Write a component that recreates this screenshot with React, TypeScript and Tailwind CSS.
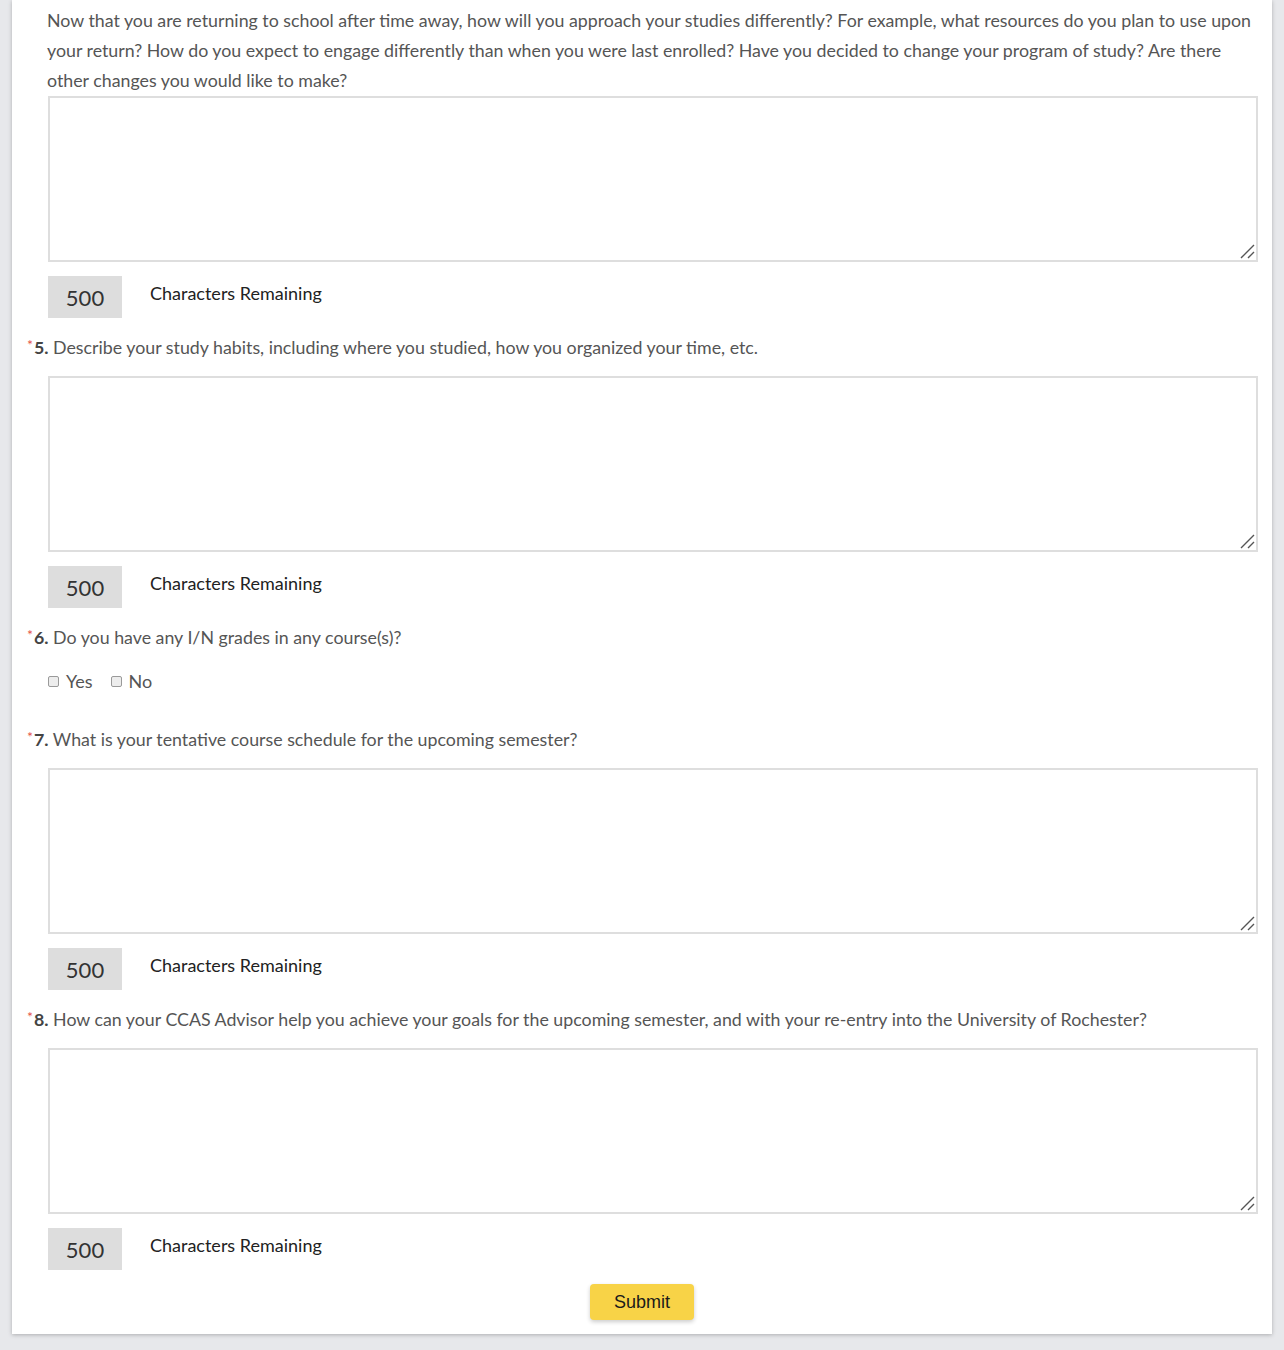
import React from 'react';

const questions = [
  { n: 5, text: 'Describe your study habits, including where you studied, how you organized your time, etc.', h: 'h-[176px]' },
  { n: 6, text: 'Do you have any I/N grades in any course(s)?', checkbox: true },
  { n: 7, text: 'What is your tentative course schedule for the upcoming semester?', h: 'h-[166px]' },
  {
    n: 8,
    text: 'How can your CCAS Advisor help you achieve your goals for the upcoming semester, and with your re-entry into the University of Rochester?',
    h: 'h-[166px]',
  },
];

function Counter() {
  return (
    <div className="mt-[14px] ml-[36px] flex items-start">
      <div className="flex h-[42px] w-[74px] items-center justify-center bg-[#dddddd] text-[22px] text-[#333]">500</div>
      <span className="ml-[28px] mt-[2px] text-[18px] leading-[30px] text-[#222]">Characters Remaining</span>
    </div>
  );
}

function Label({ n, text }: { n: number; text: string }) {
  return (
    <p className="mt-[14px] h-[30px] pl-[15px] text-[17.8px] leading-[30px] text-[#555]">
      <span className="relative -top-[4px] mr-[1px] text-[14px] leading-none text-[#e5534b]">*</span>
      <span className="font-bold text-[#444]">{n}.</span> {text}
    </p>
  );
}

function Box({ h, first }: { h: string; first?: boolean }) {
  return (
    <div className={`relative ml-[36px] w-[1210px] ${first ? '' : 'mt-[14px]'}`}>
      <textarea className={`block w-full resize-none border-2 border-[#dedede] bg-white outline-none ${h}`} />
      <svg className="pointer-events-none absolute right-[3px] bottom-[3px]" width="15" height="15" viewBox="0 0 15 15">
        <path d="M1 14 L14 1 M8 14 L14 8" stroke="#555" strokeWidth="1.4" />
      </svg>
    </div>
  );
}

function Check({ label }: { label: string }) {
  return (
    <label className="flex items-center">
      <input
        type="checkbox"
        className="h-[11px] w-[11px] appearance-none rounded-[2px] border border-[#9a9a9a] bg-[#ededed]"
      />
      <span className="ml-[7px]">{label}</span>
    </label>
  );
}

export default function App() {
  return (
    <div className="min-h-[1350px] bg-[#e7e8eb] pl-[12px]" style={{ fontFamily: 'Lato, "Noto Sans", sans-serif' }}>
      <div className="w-[1260px] bg-white pt-[5px] pb-[14px] shadow-[0_1px_4px_rgba(0,0,0,0.25)]">
        <p className="pl-[35px] pr-[20px] text-[17.8px] leading-[30px] text-[#555]">
          Now that you are returning to school after time away, how will you approach your studies differently? For
          example, what resources do you plan to use upon your return? How do you expect to engage differently than when
          you were last enrolled? Have you decided to change your program of study? Are there other changes you would like
          to make?
        </p>
        <div className="h-[1px]" />
        <Box h="h-[166px]" first />
        <Counter />
        {questions.map((q) => (
          <div key={q.n}>
            <Label n={q.n} text={q.text} />
            {q.checkbox ? (
              <div className="mt-[14px] mb-[28px] flex h-[30px] items-center gap-[18px] pl-[36px] text-[18px] text-[#555]">
                <Check label="Yes" />
                <Check label="No" />
              </div>
            ) : (
              <>
                <Box h={q.h!} />
                <Counter />
              </>
            )}
          </div>
        ))}
        <div className="mt-[14px] flex justify-center">
          <button
            type="button"
            className="h-[36px] w-[104px] rounded-[4px] bg-[#f8d347] text-[18px] text-[#1a1a1a] shadow-[0_2px_4px_rgba(0,0,0,0.2)]"
            style={{ fontFamily: '"Liberation Sans", Arial, sans-serif' }}
          >
            Submit
          </button>
        </div>
      </div>
    </div>
  );
}
